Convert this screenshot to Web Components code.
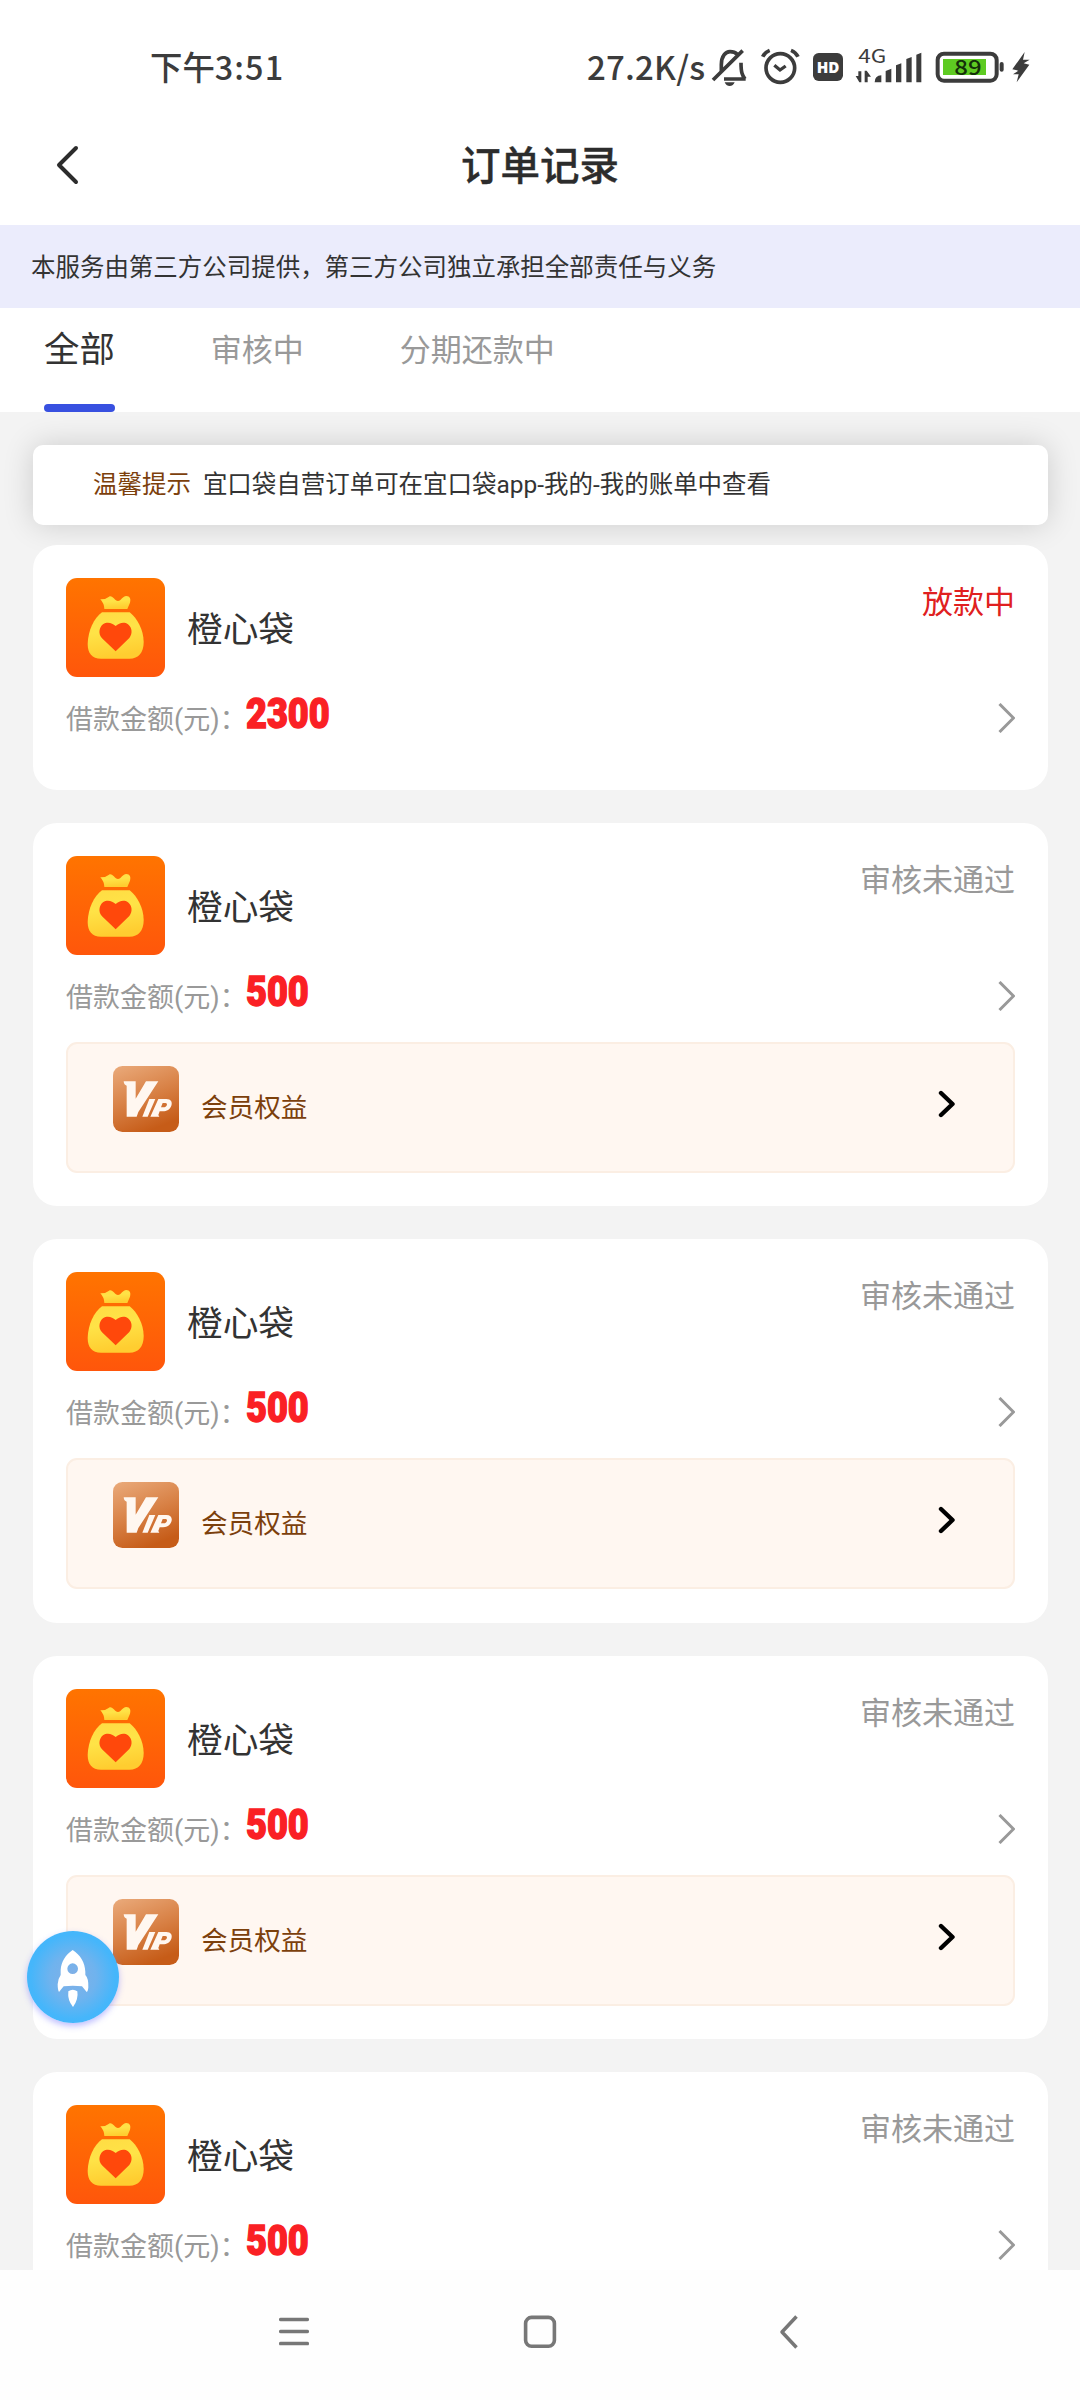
<!DOCTYPE html>
<html lang="zh-CN">
<head>
<meta charset="utf-8">
<title>订单记录</title>
<style>
html,body{margin:0;padding:0}
body{width:1080px;height:2400px;overflow:hidden;background:#f3f3f3;font-family:Roboto,"Noto Sans CJK SC",sans-serif;color:#333}
</style>
</head>
<body>
<loan-app></loan-app>
<script>
const define = (name, html) => {
  const t = document.createElement('template');
  t.innerHTML = html;
  customElements.define(name, class extends HTMLElement {
    constructor() {
      super();
      this.attachShadow({ mode: 'open' }).appendChild(t.content.cloneNode(true));
    }
  });
};

define('status-bar', `
<style>
:host{display:flex;align-items:flex-start;height:110px;box-sizing:border-box;padding:30px 0 0 150px;background:#fff;color:#3c3c3c;font-family:"Noto Sans CJK SC",sans-serif;font-weight:500}
.time{width:437px;font-size:32.4px;line-height:72px;white-space:nowrap}
.time span{letter-spacing:1.1px}
.net{width:123px;font-size:33px;line-height:73px;white-space:nowrap;letter-spacing:.2px}
svg{display:block}
</style>
<div class="time">下午<span>3:51</span></div>
<div class="net">27.2K/s</div>
<svg width="330" height="80" viewBox="450 0 990 240" fill="none" stroke="#3c3c3c" stroke-width="11">
  <path d="M484 126V104C484 78 497 65 510 65C519 65 527 68 532 73M459 150L548 62M492 147H557M555 147C547 136 543 128 543 98"/>
  <path d="M494 157H524Q520 168 509 168T494 157Z" fill="#3c3c3c" stroke="none"/>
  <circle cx="661" cy="114" r="43"/>
  <path d="M643 106L660 120L677 108" stroke-width="10"/><path d="M608 80Q614 67 629 61M714 80Q708 67 693 61" stroke-width="11"/>
  <rect x="759" y="69" width="90" height="84" rx="17" fill="#3c3c3c" stroke="none"/>
  <g fill="#3c3c3c" stroke="none">
  <path d="M944 157Q944 137 964 136V157ZM977 157V123L994 116V157ZM1008 157V106L1024 100V157ZM1039 157V87L1055 81V157ZM1069 157V74L1084 68V157Z"/>
  <path d="M887 138H895V124H904V157H898ZM914 157V122H920L933 140H923V157Z"/>
  <rect x="1319" y="96" width="12" height="29" rx="6"/>
  <path d="M1394 66L1357 118L1375 122L1359 133L1376 133L1370 157L1408 104L1391 100L1409 89L1389 89Z"/>
  </g>
  <rect x="1133" y="71" width="177" height="81" rx="19" stroke-width="12"/>
  <rect x="1149" y="87" width="129" height="48" fill="#5ecb22" stroke="none"/>
  <g stroke="none" font-family="Noto Sans CJK SC,sans-serif">
  <text x="770" y="129" textLength="68" lengthAdjust="spacingAndGlyphs" font-family="Open Sans,sans-serif" font-size="48" font-weight="800" fill="#fff">HD</text>
  <text x="895" y="98" textLength="84" lengthAdjust="spacingAndGlyphs" font-size="55" font-weight="400" fill="#3c3c3c">4G</text>
  <text x="1183" y="135" textLength="82" lengthAdjust="spacingAndGlyphs" font-size="62" font-weight="500" fill="#14300a">89</text>
  </g>
</svg>`);

define('nav-header', `
<style>
:host{display:grid;grid-template-columns:100px 1fr 100px;align-items:center;height:115px;box-sizing:border-box;padding-bottom:5px;background:#fff}
svg{display:block;margin-left:50px}
h1{margin:-4px 0 0;text-align:center;font:500 39.5px/60px "Noto Sans CJK SC",sans-serif;color:#2c2c2c;-webkit-text-stroke:.4px #2c2c2c}
</style>
<svg width="34" height="44" viewBox="0 0 34 44" fill="none" stroke="#2c2c2c" stroke-width="4" stroke-linecap="round" stroke-linejoin="round"><path d="M26 5L9 22L26 39"/></svg>
<h1><slot></slot></h1>`);

define('notice-bar', `
<style>:host{display:flex;align-items:center;height:83px;box-sizing:border-box;padding:2px 0 0 31px;background:#ebecfc;color:#333;font-size:24.48px;line-height:36px}</style>
<span><slot></slot></span>`);

define('tab-bar', `
<style>:host{display:flex;position:relative;z-index:1;height:104px;padding-left:44px;gap:96px;background:#fff}</style>
<slot></slot>`);

define('tab-item', `
<style>
:host{display:flex;flex-direction:column;justify-content:space-between;font-size:31px;color:#999}
:host([active]){font-size:35.4px;color:#333}
span{line-height:86px}
:host([active]) span{line-height:84px}
i{display:none;height:8px;border-radius:4px;background:#3850e0}
:host([active]) i{display:block}
</style>
<span><slot></slot></span><i></i>`);

define('tip-card', `
<style>
:host{display:flex;align-items:center;height:80px;box-sizing:border-box;padding-left:60px;gap:12px;border-radius:10px;background:#fff;box-shadow:0 0 31px rgba(0,0,0,.16);font-size:24.48px;line-height:36px;color:#333}
b{font-weight:400;color:#7c400c}
</style>
<b><slot name="label"></slot></b><span><slot></slot></span>`);

define('bag-logo', `
<style>:host{display:block;width:99px;height:99px}svg{display:block}</style>
<svg width="99" height="99" viewBox="0 0 297 297">
<defs>
<linearGradient id="o" x2="0" y2="1"><stop stop-color="#ff7400"/><stop offset="1" stop-color="#ff560b"/></linearGradient>
<linearGradient id="y" x1="0" y1="0" x2=".2" y2="1"><stop stop-color="#ffdc44"/><stop offset=".45" stop-color="#ffe347"/><stop offset="1" stop-color="#ffcd30"/></linearGradient>
</defs>
<rect width="297" height="297" rx="33" fill="url(#o)"/>
<path d="M103 64Q118 65 129 56C140 51 146 69 156 69C166 69 168 55 181 54C192 54 195 63 192 74L184 93H115Q115 77 103 64Z" fill="url(#y)"/>
<path d="M108 103H191C213 120 233 156 233 192C233 224 218 242 190 242H105C78 242 65 226 65 198C66 158 84 120 108 103Z" fill="url(#y)"/>
<path d="M149 220L108 181C96 169 99 148 111 139C125 130 139 136 149 144C159 136 173 130 186 139C199 149 200 168 190 180Z" fill="#ff480b"/>
</svg>`);

define('vip-benefit', `
<style>
:host{display:flex;align-items:flex-start;height:131px;box-sizing:border-box;border:2px solid #fbeee3;border-radius:11px;background:#fff7f1;padding:22px 58px 0 45px;color:#7c400c;font-size:26.6px}
span{margin:23px auto 0 22px;line-height:38px}
svg{display:block}
.go{margin-top:24px}
</style>
<svg width="66" height="66" viewBox="0 0 198 198">
<defs><linearGradient id="g" x1=".1" y1="0" x2=".5" y2="1"><stop stop-color="#e9a878"/><stop offset=".5" stop-color="#d98348"/><stop offset="1" stop-color="#c65c18"/></linearGradient></defs>
<rect width="198" height="198" rx="28" fill="url(#g)"/>
<g fill="#fff7f0"><path d="M32 46H68V98L99 46H136L76 138L71 152H41V59Q33 57 32 46Z"/><path d="M109 99H127L104 152H88Z"/><path fill-rule="evenodd" d="M136 99H160C174 99 179 109 175 119C171 130 161 136 150 136H140L136 147L139 152H112ZM149 111L144 124H151C162 124 166 111 157 111Z"/></g>
</svg>
<span><slot></slot></span>
<svg class="go" width="18" height="28" viewBox="0 0 18 28" fill="none" stroke="#000" stroke-width="4.4" stroke-linecap="round" stroke-linejoin="round"><path d="M4 3L15.5 14L4 25"/></svg>`);

define('order-card', `
<style>
:host{display:block;position:relative;flex:none;height:245px;box-sizing:border-box;padding:33px 32.5px 0 33px;border-radius:24px;background:#fff}
:host([tall]){height:383.3px}
.top{display:flex;height:99px}
.name{margin:27px auto 0 22px;font-size:35.7px;line-height:50px;color:#333}
.status{font-size:31px;line-height:50px;color:#999}
:host([live]) .status{color:#e02020}
.row{display:flex;align-items:center;height:56px;margin-top:13px}
.label{width:180px;flex:none;margin-top:4px;font-size:27px;line-height:36px;color:#999;white-space:nowrap}
.amount{font:900 42px/50px Roboto,sans-serif;color:#fa2024;-webkit-text-stroke:1.4px #fa2024;margin-top:-8px;transform:scaleX(.86);transform-origin:0 50%;margin-right:auto}
svg{display:block}
.extra{display:block;margin-top:18px}
</style>
<div class="top"><bag-logo></bag-logo><div class="name"><slot name="name"></slot></div><div class="status"><slot name="status"></slot></div></div>
<div class="row"><div class="label">借款金额(元)：</div><div class="amount"><slot name="amount"></slot></div>
<svg width="18" height="30" viewBox="0 0 18 30" fill="none" stroke="#999" stroke-width="3"><path d="M2.5 1L16.5 15L2.5 29"/></svg></div>
<div class="extra"><slot></slot></div>`);

define('float-rocket', `
<style>
:host{display:block;position:absolute;left:27px;top:1931px;width:92px;height:92px;border-radius:50%;background:radial-gradient(circle closest-side,#82b0e6 0,#6fb3ee 50%,#45b6fb 92%);box-shadow:0 3px 6px rgba(110,110,255,.45);z-index:3}
svg{display:block}
</style>
<svg width="92" height="92" viewBox="0 0 276 276" fill="#fff"><path fill-rule="evenodd" d="M137 57C160 72 174 94 175 122V132Q185 142 184 169Q183 181 179 183L165 166Q138 163 110 166L96 183Q92 177 92 160Q93 143 101 132V116C103 92 115 72 137 57ZM137 97A16 16 0 1 0 137 129A16 16 0 1 0 137 97Z"/><path d="M124 181Q137 171 151 181Q155 205 138 228Q121 208 124 181Z"/></svg>`);

define('system-nav', `
<style>
:host{display:flex;position:absolute;left:0;top:2270px;width:1080px;height:130px;background:#fefefe;z-index:2;box-sizing:border-box;padding:42px 0 0 279px}
svg{display:block}
.home{margin:0 222px 0 214px}
</style>
<svg width="30" height="40" viewBox="0 0 30 40" stroke="#777" stroke-width="3.5" stroke-linecap="round"><path d="M1.7 7.5H28.3M1.7 19.5H28.3M1.7 31.6H28.3"/></svg>
<svg class="home" width="34" height="40" viewBox="0 0 34 40" fill="none" stroke="#777" stroke-width="3.6"><rect x="2.6" y="5.4" width="28.8" height="28.8" rx="6"/></svg>
<svg width="20" height="40" viewBox="0 0 20 40" fill="none" stroke="#777" stroke-width="3.5" stroke-linejoin="round"><path d="M17.5 4.5L3 20L17.5 35.5"/></svg>`);

const rejected = () => `<order-card tall><span slot="name">橙心袋</span><span slot="status">审核未通过</span><span slot="amount">500</span><vip-benefit>会员权益</vip-benefit></order-card>`;
define('loan-app', `
<style>
:host{display:flex;flex-direction:column;position:relative;width:1080px;height:2400px;overflow:hidden;background:#f3f3f3}
status-bar,nav-header,notice-bar,tab-bar{flex:none}
main{display:flex;flex-direction:column;padding:33px 32.5px 0 33px}
.list{display:flex;flex-direction:column;gap:33px;margin-top:20px}
</style>
<status-bar></status-bar>
<nav-header>订单记录</nav-header>
<notice-bar>本服务由第三方公司提供，第三方公司独立承担全部责任与义务</notice-bar>
<tab-bar><tab-item active>全部</tab-item><tab-item>审核中</tab-item><tab-item>分期还款中</tab-item></tab-bar>
<main>
<tip-card><span slot="label">温馨提示</span>宜口袋自营订单可在宜口袋app-我的-我的账单中查看</tip-card>
<div class="list">
<order-card live><span slot="name">橙心袋</span><span slot="status">放款中</span><span slot="amount">2300</span></order-card>
${rejected()}${rejected()}${rejected()}${rejected()}
</div>
</main>
<float-rocket></float-rocket>
<system-nav></system-nav>`);
</script>
</body>
</html>
